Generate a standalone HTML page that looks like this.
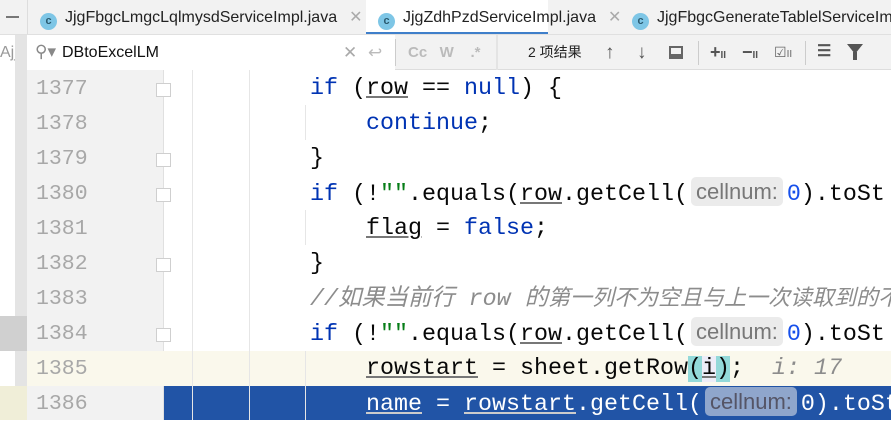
<!DOCTYPE html>
<html><head><meta charset="utf-8"><style>
*{margin:0;padding:0;box-sizing:border-box}
body{width:891px;height:420px;overflow:hidden;background:#fff;position:relative;font-family:"Liberation Sans","Noto Sans CJK SC",sans-serif}
.abs{position:absolute}
#tabs{left:0;top:0;width:891px;height:35px;background:#f2f2f2;border-bottom:1px solid #e0e0e0;overflow:hidden}
.tab{position:absolute;top:0;height:34px;font-size:16px;line-height:36px;color:#222;white-space:nowrap}
.ci{display:inline-block;width:17px;height:17px;border-radius:50%;background:#7ec6e6;color:#2a5a70;font-size:11px;line-height:17px;text-align:center;vertical-align:-2px;margin-right:8px;font-weight:bold}
.x{color:#aaa;margin-left:12px;font-size:16px}
#search{left:27px;top:35px;width:864px;height:35px;background:#f2f2f2;border-bottom:1px solid #ddd}
.code{font-family:"Liberation Mono","Noto Sans CJK SC",monospace;font-size:23.33px;white-space:pre;color:#080808}
.ln{position:absolute;left:36px;font-family:"Liberation Mono",monospace;font-size:21.5px;color:#a8a8a8;line-height:35px}
.line{position:absolute;height:35px;line-height:35px}
.kw{color:#0033b3}
.num{color:#1750eb}
.str{color:#067d17}
.u{text-decoration:underline;text-decoration-color:#777}
.cm{color:#8c8c8c;font-style:italic}
.hint{display:inline-block;background:#ebebeb;color:#777;border-radius:5px;font-family:"Liberation Sans",sans-serif;font-size:22px;line-height:29px;padding:0 5px;vertical-align:1px;margin:0 4px 0 3px}
.guide{position:absolute;width:1px;background:#e6e6e6}
.fold{position:absolute;left:156px;width:15px;height:14px;border:1px solid #cfcfcf;background:#fff}
</style></head><body>
<div id="tabs" class="abs">
  <div class="abs" style="left:6px;top:16px;width:13px;height:2px;background:#777"></div>
  <div class="abs" style="left:27px;top:0;width:1px;height:35px;background:#ddd"></div>
  <div class="tab" style="left:40px"><span class="ci">c</span>JjgFbgcLmgcLqlmysdServiceImpl.java<span class="x">✕</span></div>
  <div class="tab" style="left:366px;width:182px;background:#fff;padding-left:12px;border-bottom:3px solid #3f7fca;height:35px"><span class="ci">c</span>JjgZdhPzdServiceImpl.java<span class="x">✕</span></div>
  <div class="tab" style="left:632px"><span class="ci">c</span>JjgFbgcGenerateTablelServiceImpl</div>
</div>
<div class="abs" style="left:0;top:35px;width:27px;height:35px;background:#fff;color:#999;font-size:16px;line-height:35px;overflow:hidden">Ajjg</div>
<div class="abs" style="left:15px;top:35px;width:12px;height:385px;background:#e4e4e4"></div>
<div id="search" class="abs">
  <div class="abs" style="left:0;top:0;width:368px;height:35px;background:#fff"></div>
  <div class="abs" style="left:8px;top:7px;color:#888;font-size:17px">⚲▾</div>
  <div class="abs" style="left:35px;top:0;line-height:35px;font-size:16px;color:#111">DBtoExcelLM</div>
  <div class="abs" style="left:316px;top:0;line-height:35px;font-size:17px;color:#aaa">✕</div>
  <div class="abs" style="left:341px;top:0;line-height:35px;font-size:17px;color:#bbb">↩</div>
  <div class="abs" style="left:368px;top:4px;width:1px;height:27px;background:#ccc"></div>
  <div class="abs" style="left:381px;top:0;line-height:35px;font-size:15px;color:#bbb;font-weight:bold">Cc&nbsp;&nbsp;&nbsp;W&nbsp;&nbsp;&nbsp;&nbsp;.*</div>
  <div class="abs" style="left:469px;top:0;width:2px;height:35px;background:#e4e4e4"></div>
  <div class="abs" style="left:501px;top:0;line-height:35px;font-size:14px;color:#222">2 项结果</div>
  <div class="abs" style="left:578px;top:0;line-height:35px;font-size:19px;color:#555;font-weight:bold">↑</div>
  <div class="abs" style="left:610px;top:0;line-height:35px;font-size:19px;color:#555;font-weight:bold">↓</div>
  <div class="abs" style="left:642px;top:11px;width:14px;height:13px;border:2px solid #666;border-bottom-width:5px"></div>
  <div class="abs" style="left:671px;top:6px;width:1px;height:24px;background:#ccc"></div>
  <div class="abs" style="left:683px;top:2px;line-height:30px;font-size:18px;color:#555;font-weight:bold">+<span style="font-size:10px">II</span></div>
  <div class="abs" style="left:715px;top:2px;line-height:30px;font-size:18px;color:#555;font-weight:bold">−<span style="font-size:10px">II</span></div>
  <div class="abs" style="left:747px;top:2px;line-height:30px;font-size:14px;color:#666">☑<span style="font-size:10px">II</span></div>
  <div class="abs" style="left:778px;top:6px;width:1px;height:24px;background:#ccc"></div>
  <div class="abs" style="left:790px;top:2px;line-height:30px;font-size:16px;color:#555;font-weight:bold">☰</div>
  <div class="abs" style="left:820px;top:9px;width:0;height:0;border-left:8px solid transparent;border-right:8px solid transparent;border-top:10px solid #555"></div>
  <div class="abs" style="left:826px;top:17px;width:4px;height:8px;background:#555"></div>
</div>
<div class="abs" style="left:27px;top:70px;width:136px;height:350px;background:#f2f2f2"></div>
<div class="abs" style="left:163px;top:70px;width:1px;height:350px;background:#e0e0e0"></div>
<div class="abs" style="left:27px;top:351px;width:864px;height:35px;background:#faf8ec"></div>
<div class="abs" style="left:0;top:316px;width:27px;height:35px;background:#d0d0d0"></div>
<div class="abs" style="left:0;top:386px;width:27px;height:34px;background:#f0eed8"></div>
<div class="abs" style="left:164px;top:386px;width:727px;height:34px;background:#2154a6"></div>
<div class="guide" style="left:192px;top:70px;height:350px"></div>
<div class="guide" style="left:249px;top:70px;height:350px"></div>
<div class="guide" style="left:305px;top:105px;height:35px"></div>
<div class="guide" style="left:305px;top:210px;height:35px"></div>
<div class="guide" style="left:305px;top:351px;height:69px"></div>
<div class="fold" style="top:83px"></div>
<div class="fold" style="top:153px"></div>
<div class="fold" style="top:188px"></div>
<div class="fold" style="top:258px"></div>
<div class="fold" style="top:328px"></div>

<div class="ln" style="top:72px">1377</div>
<div class="ln" style="top:107px">1378</div>
<div class="ln" style="top:142px">1379</div>
<div class="ln" style="top:177px">1380</div>
<div class="ln" style="top:212px">1381</div>
<div class="ln" style="top:247px">1382</div>
<div class="ln" style="top:282px">1383</div>
<div class="ln" style="top:317px">1384</div>
<div class="ln" style="top:352px">1385</div>
<div class="ln" style="top:387px">1386</div>

<div class="line code" style="left:310px;top:72px"><span class="kw">if</span> (<span class="u">row</span> == <span class="kw">null</span>) {</div>
<div class="line code" style="left:366px;top:107px"><span class="kw">continue</span>;</div>
<div class="line code" style="left:310px;top:142px">}</div>
<div class="line code" style="left:310px;top:177px"><span class="kw">if</span> (!<span class="str">""</span>.equals(<span class="u">row</span>.getCell(<span class="hint">cellnum:</span><span class="num">0</span>).toSt</div>
<div class="line code" style="left:366px;top:212px"><span class="u">flag</span> = <span class="kw">false</span>;</div>
<div class="line code" style="left:310px;top:247px">}</div>
<div class="line code cm" style="left:310px;top:282px">//如果当前行 row 的<span style="font-size:22px">第一列不为空且与上一次读取到的不</span></div>
<div class="line code" style="left:310px;top:317px"><span class="kw">if</span> (!<span class="str">""</span>.equals(<span class="u">row</span>.getCell(<span class="hint">cellnum:</span><span class="num">0</span>).toSt</div>
<div class="line code" style="left:366px;top:352px"><span class="u">rowstart</span> = sheet.getRow<span style="background:#93d9d9">(</span><span class="u" style="background:#ededf8">i</span><span style="background:#93d9d9">)</span>;  <span class="cm">i: 17</span></div>
<div class="line code" style="left:366px;top:387px;color:#fff"><span class="u" style="text-decoration-color:#ccc">name</span> = <span class="u" style="text-decoration-color:#ccc">rowstart</span>.getCell(<span class="hint" style="background:#8fa6cc;color:#556">cellnum:</span>0).toSt</div>
</body></html>
